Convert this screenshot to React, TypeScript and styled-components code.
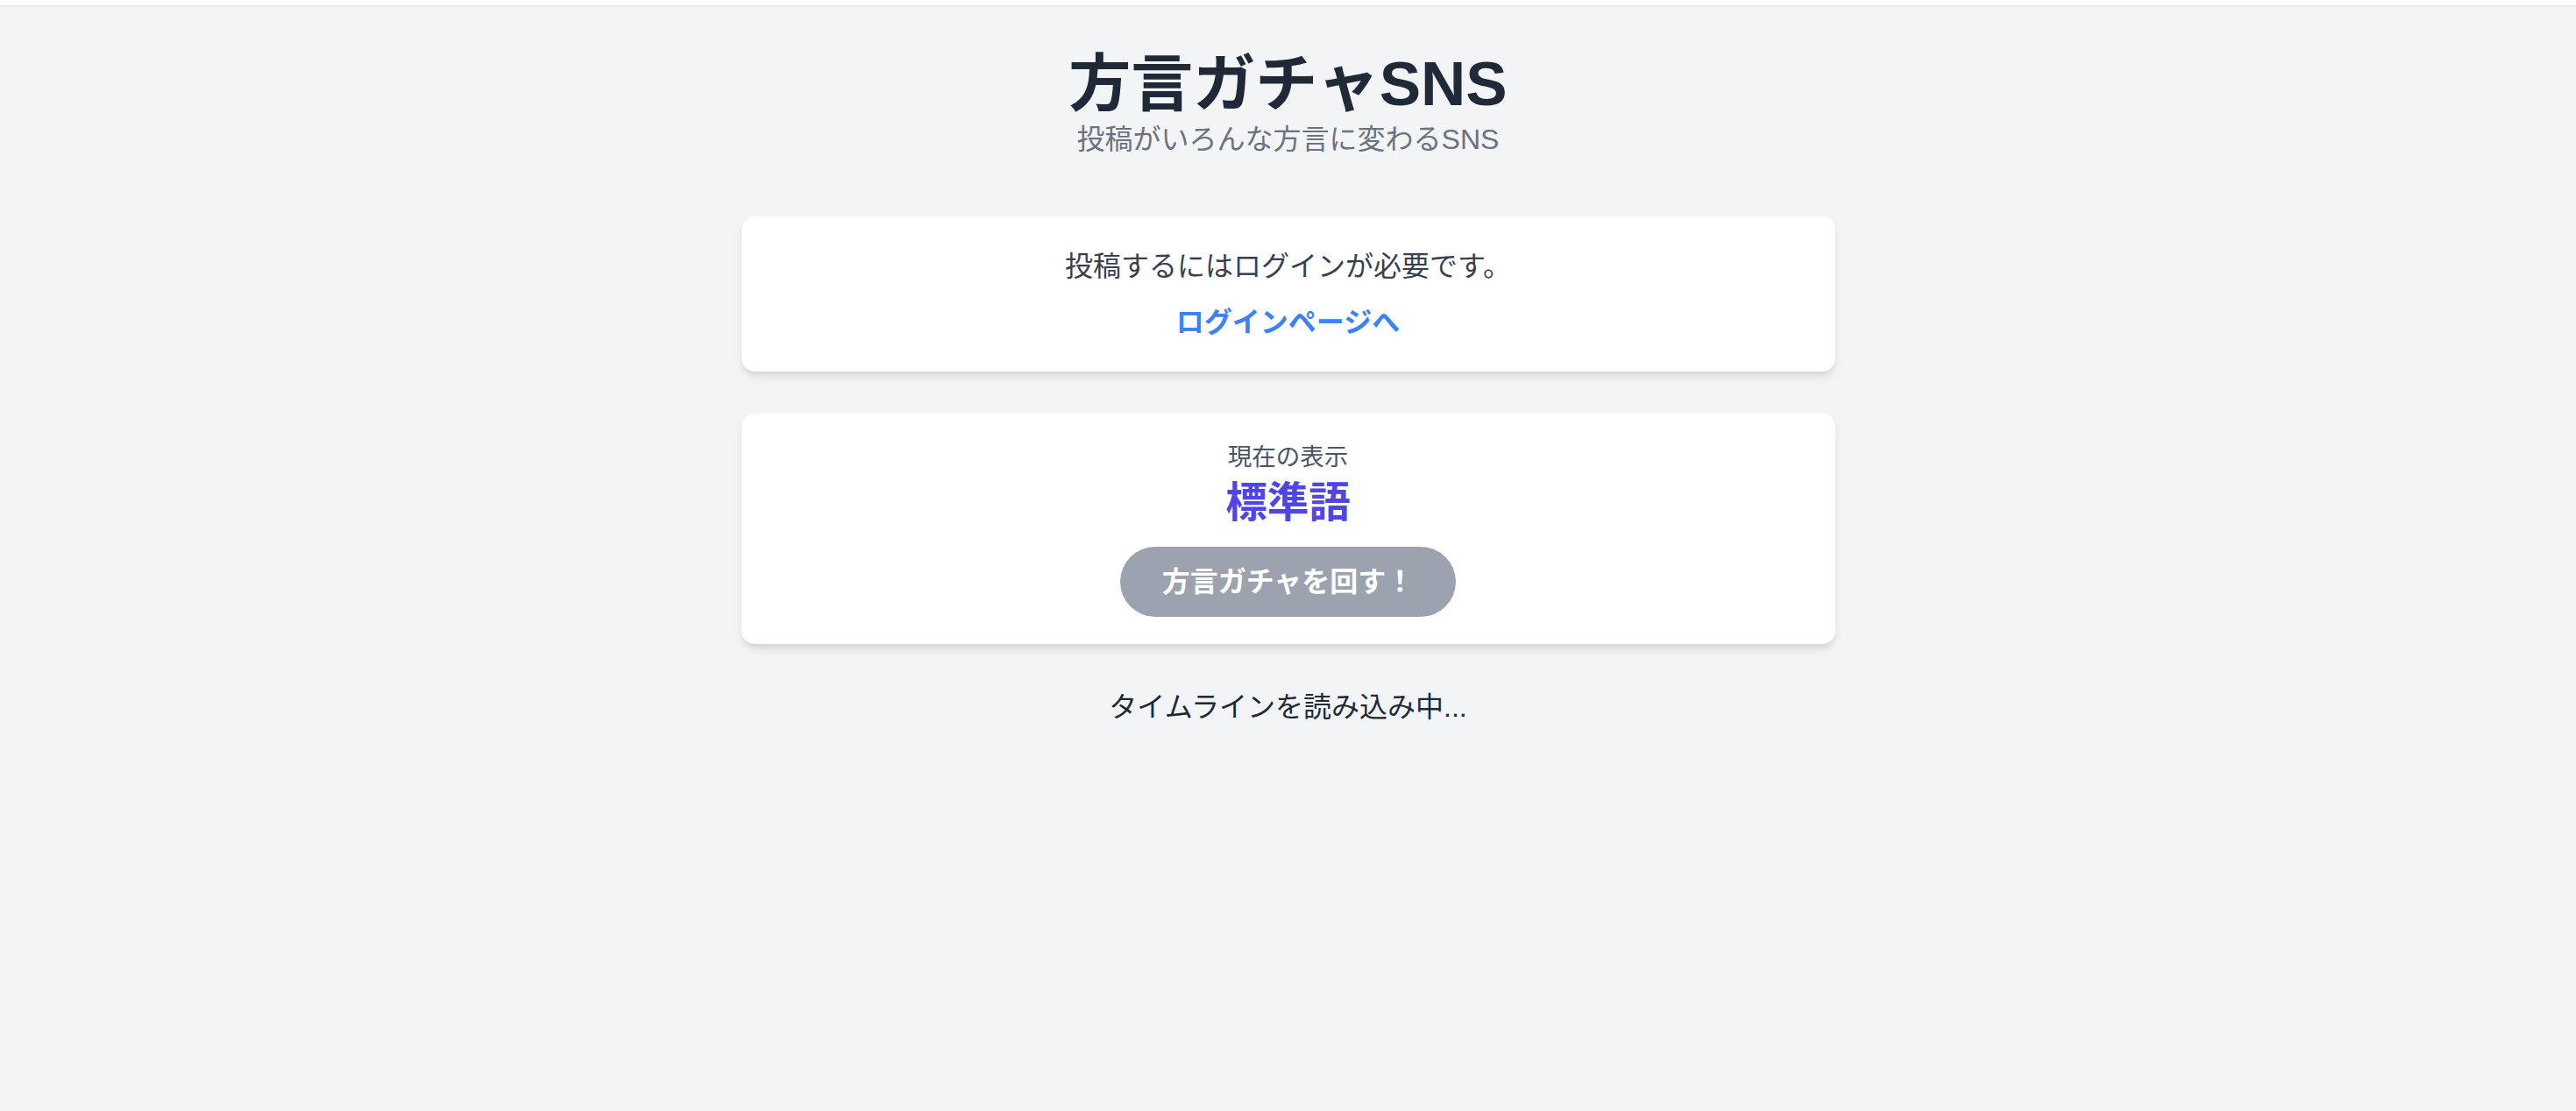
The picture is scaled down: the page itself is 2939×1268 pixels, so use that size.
import React from "react";
import styled, { createGlobalStyle } from "styled-components";

const GlobalStyle = createGlobalStyle`
    html, body {
        margin: 0;
        padding: 0;
        background: #f3f4f6;
        font-family: "Liberation Sans", "Noto Sans CJK JP", sans-serif;
        min-height: 100vh;
    }
    * {
        box-sizing: border-box;
    }
`;

const TopBar = styled.div`
    height: 8px;
    background: #ffffff;
    border-bottom: 2px solid #e5e7eb;
`;

const Header = styled.header`
    display: flex;
    flex-direction: column;
    align-items: center;
    padding-top: 46px;
`;

const Title = styled.h1`
    margin: 0;
    font-size: 71px;
    line-height: 84px;
    font-weight: 700;
    color: #1f2937;
`;

const Subtitle = styled.p`
    margin: 0;
    font-size: 32px;
    line-height: 42px;
    color: #6b7280;
`;

const Main = styled.main`
    width: 1248px;
    margin: 0 auto;
    padding-top: 67px;
    display: flex;
    flex-direction: column;
    gap: 48px;
`;

const Card = styled.section<{ $pad: string }>`
    background: #ffffff;
    border-radius: 15px;
    box-shadow: 0 7px 12px -2px rgba(0, 0, 0, 0.1), 0 4px 8px -4px rgba(0, 0, 0, 0.1);
    display: flex;
    flex-direction: column;
    align-items: center;
    padding: ${(props) => props.$pad};
`;

const Notice = styled.p`
    margin: 0 0 16px;
    font-size: 32px;
    line-height: 48px;
    color: #374151;
`;

const LoginLink = styled.a`
    font-size: 32px;
    line-height: 48px;
    font-weight: 700;
    color: #3b82f6;
    text-decoration: none;
    cursor: pointer;
`;

const Label = styled.p`
    margin: 0;
    font-size: 27.5px;
    line-height: 39px;
    color: #4b5563;
`;

const Dialect = styled.h2`
    margin: 3px 0 20px;
    font-size: 47.5px;
    line-height: 60px;
    font-weight: 700;
    color: #4f46e5;
`;

const GachaButton = styled.button`
    font-family: inherit;
    font-size: 32px;
    line-height: 48px;
    font-weight: 700;
    color: #ffffff;
    background: #9ca3af;
    border: none;
    border-radius: 9999px;
    padding: 16px 48px;
    cursor: not-allowed;
`;

const Loading = styled.p`
    margin: 0;
    text-align: center;
    font-size: 32px;
    line-height: 48px;
    color: #1f2937;
`;

export default function App() {
    return (
        <>
            <GlobalStyle />
            <TopBar />
            <Header>
                <Title>方言ガチャSNS</Title>
                <Subtitle>投稿がいろんな方言に変わるSNS</Subtitle>
            </Header>
            <Main>
                <Card $pad="33px 45px 32px">
                    <Notice>投稿するにはログインが必要です。</Notice>
                    <LoginLink href="#">ログインページへ</LoginLink>
                </Card>
                <Card $pad="30px 45px 31px">
                    <Label>現在の表示</Label>
                    <Dialect>標準語</Dialect>
                    <GachaButton disabled>方言ガチャを回す！</GachaButton>
                </Card>
                <Loading>タイムラインを読み込み中...</Loading>
            </Main>
        </>
    );
}
